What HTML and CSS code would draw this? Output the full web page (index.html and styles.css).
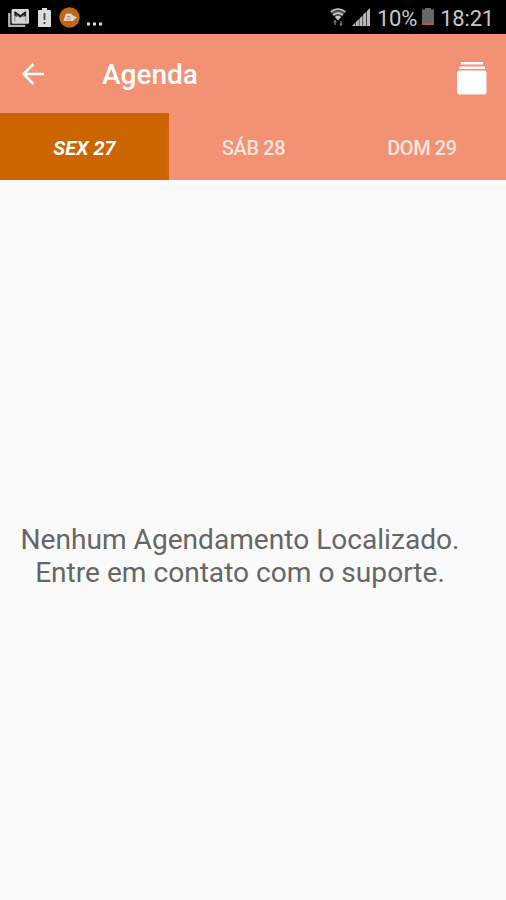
FILE: index.html
```html
<!DOCTYPE html>
<html lang="pt-BR">
<head>
<meta charset="utf-8">
<title>Agenda</title>
<link rel="stylesheet" href="styles.css">
</head>
<body>
<div class="status">
  <svg class="mail" width="21" height="18" viewBox="0 0 21 18"><path d="M1.200 4v12.800h16" fill="none" stroke="#b5b5b5" stroke-width="2.200"/><rect x="3.500" y="0" width="17.500" height="14.800" rx="1.500" fill="#d6d6d6"/><path d="M6.500 3.200L12.300 7.500 18 3.200" fill="none" stroke="#222" stroke-width="2.200"/><path d="M6.500 3v4l3 1zM18 3v4l-3 1z" fill="#222"/><path d="M6.800 7v5.500M17.800 7v5.500" stroke="#888" stroke-width="1"/></svg>
  <svg class="alert" width="13" height="19" viewBox="0 0 13 19"><path d="M4 0h5v2h3q1 0 1 1v15q0 1-1 1H1q-1 0-1-1V3q0-1 1-1h3z" fill="#dcdcdc"/><path d="M6.500 5v7M6.500 14v2" stroke="#444" stroke-width="1.800"/></svg>
  <svg class="app" width="21" height="21" viewBox="0 0 21 21"><circle cx="10.500" cy="10.500" r="10.200" fill="#bd6813"/><path d="M4.500 14l1-3.500 1.500-4h5l2 2 4 2-4.500 3.500z" fill="#e2d3cc"/><path d="M8 9.500h3M7.500 12h4" fill="none" stroke="#b98462"/></svg>
  <svg class="dots" width="15" height="4" viewBox="0 0 15 4"><path d="M0 .5h3v3H0zM6 .5h3v3H6zM12 .5h3v3h-3z" fill="#ddd"/></svg>
  <span class="space"></span>
  <svg class="wifi" width="16" height="18" viewBox="0 0 16 18"><path d="M0 3.500Q8-3 16 3.500L8 12.500z" fill="#4a4a4a"/><g fill="none" stroke="#c0c0c0" stroke-width="1.700"><path d="M.8 3.800Q8-1.800 15.200 3.800M3 7q5-4 10 0"/></g><path d="M5 9q3-2.500 6 0l-3 3.500z" fill="#ccc"/><path d="M5 17v-4M11 13v4M3.800 14.500L5 12.500l1.200 2M9.800 15.500L11 17.500l1.200-2" fill="none" stroke="#777" stroke-width="1.300"/></svg>
  <svg class="signal" width="18" height="18" viewBox="0 0 18 18"><path d="M0 18L18 0v18z" fill="#444"/><path d="M0 18l3-3v3zM4 18v-4l2.800-2.800V18zM7.600 18v-7.600l2.700-2.700V18zM11.200 18V6.800L14 4v14zM15 18V3l3-3v18z" fill="#bbb"/></svg>
  <span class="percent">10%</span>
  <svg class="battery" width="12" height="17" viewBox="0 0 12 17"><path d="M3 0h6v1.500h3V17H0V1.500h3z" fill="#686868"/><path d="M0 15h12v2H0z" fill="#c65335"/></svg>
  <span class="clock">18:21</span>
</div>
<header class="bar">
  <svg class="back" width="22" height="22" viewBox="0 0 22 22"><path d="M22 11H2M11.500 1L1.500 11l10 10" fill="none" stroke="#fff" stroke-width="2.500"/></svg>
  <h1 class="title">Agenda</h1>
  <svg class="cards" width="30" height="33" viewBox="0 0 30 33"><path d="M4 1.300h22M2 5.800h26" stroke="#fff" stroke-width="2.400"/><rect x="0" y="8.500" width="29.500" height="24" rx="2.500" fill="#fff"/></svg>
</header>
<nav class="tabs">
  <div class="tab active">SEX 27</div>
  <div class="tab">SÁB 28</div>
  <div class="tab">DOM 29</div>
</nav>
<main class="content">
  <p class="message">Nenhum Agendamento Localizado.<br>Entre em contato com o suporte.</p>
</main>
</body>
</html>
```
FILE: styles.css
```css
* { box-sizing: border-box; }
body {
  margin: 0;
  height: 900px;
  display: flex;
  flex-direction: column;
  overflow: hidden;
  background: #fafafa;
  font-family: Roboto, sans-serif;
}
svg { display: block; flex: none; }
.status {
  height: 34px;
  flex: none;
  display: flex;
  align-items: flex-start;
  padding: 0 12px 0 8px;
  background: #000;
  color: #c8c8c8;
  font-size: 22px;
  line-height: 38px;
}
.mail { margin-top: 9px; }
.alert { margin: 8px 0 0 9px; }
.app { margin: 7px 0 0 8px; }
.dots { margin: 22px 0 0 7px; }
.space { flex: 1; }
.wifi { margin: 8px 6px 0 0; }
.signal { margin: 8px 7px 0 0; }
.battery { margin: 8px 6px 0 5px; }
.percent, .clock { letter-spacing: -0.2px; }
.bar {
  height: 79px;
  flex: none;
  display: flex;
  align-items: center;
  padding: 0 19px 0 22px;
  background: #f29174;
  color: #fff;
}
.title {
  flex: 1;
  margin: 2px 0 0 58px;
  font-size: 28px;
  font-weight: 500;
  line-height: 32px;
}
.cards { margin-top: 9px; }
.tabs {
  height: 67px;
  flex: none;
  display: grid;
  grid-template-columns: 169px 169px 168px;
  background: #f29174;
}
.tab {
  display: flex;
  align-items: center;
  justify-content: center;
  padding-top: 2px;
  color: #fde5dc;
  font-size: 20px;
  font-weight: 500;
  letter-spacing: -0.4px;
}
.active {
  background: #ca6500;
  color: #fff;
  font-weight: 700;
  font-style: italic;
  letter-spacing: 0;
}
.content {
  flex: 1;
  padding: 343px 26px 0 0;
}
.message {
  margin: 0;
  text-align: center;
  color: #666;
  font-size: 28.1px;
  line-height: 33px;
}
```
